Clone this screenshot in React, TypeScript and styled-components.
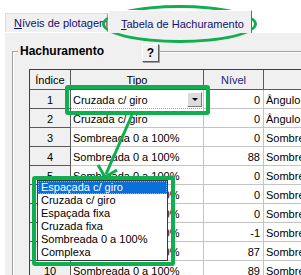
import React from 'react'
import styled, { createGlobalStyle } from 'styled-components'

const GREEN = '#0fae4f'

const Global = createGlobalStyle`
  html, body {
    margin: 0;
    padding: 0;
    background: #fff;
  }
  body {
    font-family: "Liberation Sans", Arial, sans-serif;
    font-size: 11px;
    color: #000;
  }
`

const Screen = styled.div`
  position: relative;
  width: 301px;
  height: 275px;
  overflow: hidden;
  background: #fff;
`

const TabStrip = styled.div`
  display: flex;
  align-items: flex-end;
  height: 32px;
  padding-left: 5px;
  box-sizing: border-box;
`

const Tab = styled.div<{ $active?: boolean }>`
  box-sizing: border-box;
  display: flex;
  align-items: flex-end;
  height: ${p => (p.$active ? 23 : 19)}px;
  width: ${p => (p.$active ? 144 : 103)}px;
  padding: 0 0 3px ${p => (p.$active ? 12 : 8)}px;
  margin-bottom: ${p => (p.$active ? -1 : 0)}px;
  position: relative;
  z-index: ${p => (p.$active ? 1 : 0)};
  background: #f0f0f0;
  border-top: 1px solid ${p => (p.$active ? '#fff' : '#dcdcdc')};
  border-left: 1px solid ${p => (p.$active ? '#fff' : '#dcdcdc')};
  border-right: 1px solid ${p => (p.$active ? '#6a6a6a' : '#a0a0a0')};
  color: #101070;
  font-size: 11px;
  white-space: nowrap;
  overflow: hidden;
  u {
    text-decoration: underline;
  }
`

const Panel = styled.div`
  margin-left: 4px;
  height: 243px;
  background: #f0f0f0;
  border-top: 1px solid #fff;
  border-left: 1px solid #fff;
  box-sizing: border-box;
  overflow: hidden;
`

const GroupBox = styled.div`
  margin: 18px 0 0 7px;
  width: 400px;
  height: 300px;
  border-top: 1px solid #a0a0a0;
  border-left: 1px solid #a0a0a0;
  box-shadow: inset 1px 1px 0 #fff;
`

const GroupHeader = styled.div`
  display: flex;
  align-items: flex-start;
  margin-top: -8px;
  padding-left: 5px;
`

const GroupTitle = styled.div`
  width: 122px;
  padding-left: 2px;
  background: #f0f0f0;
  font-weight: bold;
  font-size: 12px;
  line-height: 14px;
`

const HelpButton = styled.div`
  box-sizing: border-box;
  width: 17px;
  height: 18px;
  display: flex;
  align-items: center;
  justify-content: center;
  background: #f0f0f0;
  border: 1px solid;
  border-color: #fff #5a5a5a #5a5a5a #fff;
  box-shadow: 1px 1px 0 #a0a0a0;
  font-weight: bold;
  font-size: 12px;
`

const Grid = styled.div`
  display: grid;
  grid-template-columns: 41px 133px 60px 140px;
  grid-template-rows: 20px;
  grid-auto-rows: 19px;
  margin: 7px 0 0 16px;
  border-top: 1px solid #404040;
  border-left: 1px solid #404040;
  width: max-content;
`

const HeadCell = styled.div<{ $navy?: boolean }>`
  box-sizing: border-box;
  display: flex;
  align-items: center;
  justify-content: center;
  background: #f0f0f0;
  border-right: 1px solid #5a5a5a;
  border-bottom: 1px solid #5a5a5a;
  color: ${p => (p.$navy ? '#1c1c78' : '#000')};
  padding-top: 1px;
`

const IndexCell = styled(HeadCell)``

const Cell = styled.div<{ $align?: 'left' | 'right'; $focus?: boolean }>`
  box-sizing: border-box;
  display: flex;
  align-items: center;
  justify-content: ${p => (p.$align === 'right' ? 'flex-end' : 'flex-start')};
  padding: 1px 3px 0 2px;
  background: #fff;
  border-right: 1px solid #c4c4c4;
  border-bottom: 1px ${p => (p.$focus ? 'dotted #e0902c' : 'solid #c4c4c4')};
  white-space: nowrap;
  overflow: hidden;
`

const ComboCell = styled(Cell)`
  justify-content: space-between;
  padding-right: 0;
`

const DropButton = styled.div`
  box-sizing: border-box;
  width: 15px;
  height: 15px;
  margin-right: 1px;
  display: flex;
  align-items: center;
  justify-content: center;
  background: #dcdcdc;
  border: 1px solid;
  border-color: #fff #7a7a7a #7a7a7a #fff;
  &::after {
    content: '';
    border-left: 3px solid transparent;
    border-right: 3px solid transparent;
    border-top: 3px solid #000;
  }
`

const DropList = styled.div`
  position: absolute;
  left: 37px;
  top: 180px;
  width: 131px;
  height: 81px;
  box-sizing: border-box;
  background: #fff;
  border: 1px solid #3a3a3a;
`

const ListItem = styled.div<{ $selected?: boolean }>`
  box-sizing: border-box;
  height: 13px;
  line-height: 12px;
  padding-left: 3px;
  font-size: 11px;
  white-space: nowrap;
  background: ${p => (p.$selected ? '#0a6fd6' : 'transparent')};
  color: ${p => (p.$selected ? '#fff' : '#000')};
  outline: ${p => (p.$selected ? '1px dotted #f0a030' : 'none')};
  outline-offset: -1px;
`

const Ellipse = styled.div`
  position: absolute;
  left: 102px;
  top: 5px;
  width: 155px;
  height: 38px;
  box-sizing: border-box;
  border: 3px solid ${GREEN};
  border-radius: 50%;
  pointer-events: none;
`

const Highlight = styled.div<{ $x: number; $y: number; $w: number; $h: number }>`
  position: absolute;
  left: ${p => p.$x}px;
  top: ${p => p.$y}px;
  width: ${p => p.$w}px;
  height: ${p => p.$h}px;
  box-sizing: border-box;
  border: 4px solid ${GREEN};
  border-radius: 3px;
  pointer-events: none;
`

const Arrow = styled.svg`
  position: absolute;
  left: 0;
  top: 0;
  pointer-events: none;
`

const rows = [
  { n: 1, tipo: 'Cruzada c/ giro', nivel: '0', extra: 'Ângulo de giro' },
  { n: 2, tipo: 'Cruzada c/ giro', nivel: '0', extra: 'Ângulo de giro' },
  { n: 3, tipo: 'Sombreada 0 a 100%', nivel: '0', extra: 'Sombreada' },
  { n: 4, tipo: 'Sombreada 0 a 100%', nivel: '88', extra: 'Sombreada' },
  { n: 5, tipo: 'Sombreada 0 a 100%', nivel: '0', extra: 'Sombreada' },
  { n: 6, tipo: 'Sombreada 0 a 100%', nivel: '0', extra: 'Sombreada' },
  { n: 7, tipo: 'Sombreada 0 a 100%', nivel: '0', extra: 'Sombreada' },
  { n: 8, tipo: 'Sombreada 0 a 100%', nivel: '-1', extra: 'Sombreada' },
  { n: 9, tipo: 'Sombreada 0 a 100%', nivel: '87', extra: 'Sombreada' },
  { n: 10, tipo: 'Sombreada 0 a 100%', nivel: '89', extra: 'Sombreada' },
]

const options = [
  'Espaçada c/ giro',
  'Cruzada c/ giro',
  'Espaçada fixa',
  'Cruzada fixa',
  'Sombreada 0 a 100%',
  'Complexa',
]

export default function App() {
  return (
    <Screen>
      <Global />
      <TabStrip>
        <Tab>
          <span><u>N</u>íveis de plotagem</span>
        </Tab>
        <Tab $active>
          <span><u>T</u>abela de Hachuramento</span>
        </Tab>
      </TabStrip>
      <Panel>
        <GroupBox>
          <GroupHeader>
            <GroupTitle>Hachuramento</GroupTitle>
            <HelpButton>?</HelpButton>
          </GroupHeader>
          <Grid>
            <HeadCell>Índice</HeadCell>
            <HeadCell>Tipo</HeadCell>
            <HeadCell $navy>Nível</HeadCell>
            <HeadCell />
            {rows.map(r => (
              <React.Fragment key={r.n}>
                <IndexCell>{r.n}</IndexCell>
                {r.n === 1 ? (
                  <ComboCell $focus>
                    <span>{r.tipo}</span>
                    <DropButton />
                  </ComboCell>
                ) : (
                  <Cell>{r.tipo}</Cell>
                )}
                <Cell $align="right">{r.nivel}</Cell>
                <Cell>{r.extra}</Cell>
              </React.Fragment>
            ))}
          </Grid>
        </GroupBox>
      </Panel>

      <DropList>
        {options.map((o, i) => (
          <ListItem key={o} $selected={i === 0}>{o}</ListItem>
        ))}
      </DropList>

      <Ellipse />
      <Highlight $x={65} $y={85} $w={145} $h={30} />
      <Highlight $x={32} $y={176} $w={143} $h={90} />
      <Arrow width={301} height={275}>
        <line x1={132} y1={115} x2={106} y2={174} stroke={GREEN} strokeWidth={3} />
        <polyline points="98,165 105,177 117,170" fill="none" stroke={GREEN} strokeWidth={3} />
      </Arrow>
    </Screen>
  )
}
